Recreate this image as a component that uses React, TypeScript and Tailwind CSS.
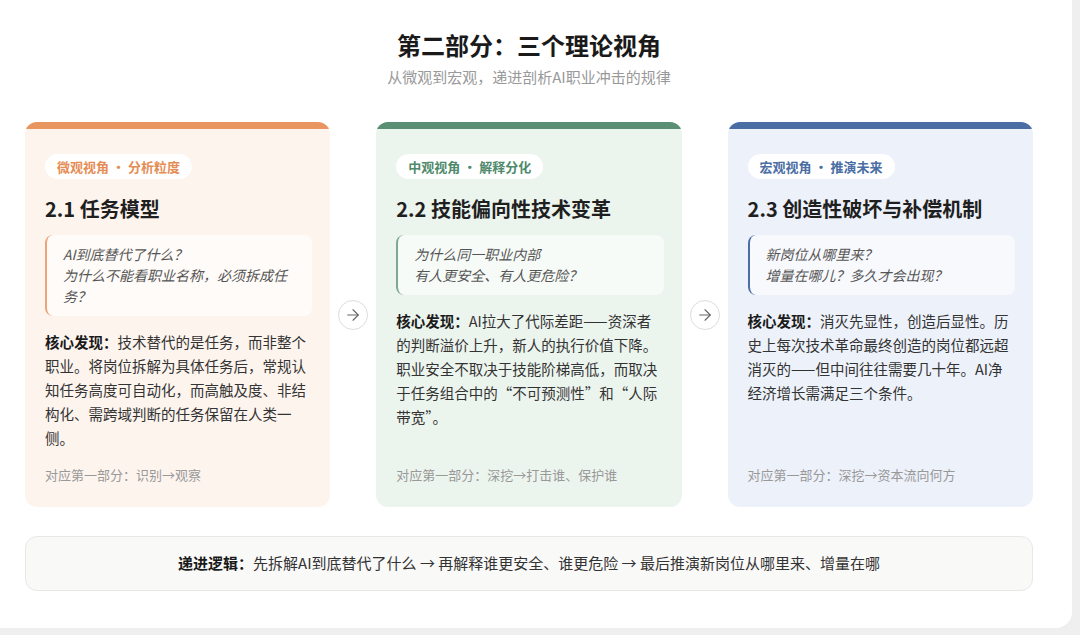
import { ArrowRight } from 'lucide-react'

const cards = [
  {
    bar: 'bg-[#e9955f]',
    bg: 'bg-[#fdf4ee]',
    badge: 'text-[#e58d55]',
    border: 'border-[#eba37a]',
    tag: '微观视角 • 分析粒度',
    title: '2.1 任务模型',
    quote: ['AI到底替代了什么？', '为什么不能看职业名称，必须拆成任务？'],
    body: '技术替代的是任务，而非整个职业。将岗位拆解为具体任务后，常规认知任务高度可自动化，而高触及度、非结构化、需跨域判断的任务保留在人类一侧。',
    foot: '对应第一部分：识别→观察',
  },
  {
    bar: 'bg-[#5b8f74]',
    bg: 'bg-[#ecf4ee]',
    badge: 'text-[#4f8a6b]',
    border: 'border-[#7ea892]',
    tag: '中观视角 • 解释分化',
    title: '2.2 技能偏向性技术变革',
    quote: ['为什么同一职业内部', '有人更安全、有人更危险？'],
    body: 'AI拉大了代际差距——资深者的判断溢价上升，新人的执行价值下降。职业安全不取决于技能阶梯高低，而取决于任务组合中的“不可预测性”和“人际带宽”。',
    foot: '对应第一部分：深挖→打击谁、保护谁',
  },
  {
    bar: 'bg-[#4a6ea4]',
    bg: 'bg-[#edf1f9]',
    badge: 'text-[#4a6ea4]',
    border: 'border-[#4a6ea4]',
    tag: '宏观视角 • 推演未来',
    title: '2.3 创造性破坏与补偿机制',
    quote: ['新岗位从哪里来？', '增量在哪儿？多久才会出现？'],
    body: '消灭先显性，创造后显性。历史上每次技术革命最终创造的岗位都远超消灭的——但中间往往需要几十年。AI净经济增长需满足三个条件。',
    foot: '对应第一部分：深挖→资本流向何方',
  },
]

function Card({ c }: { c: (typeof cards)[number] }) {
  return (
    <div className={`flex h-[385px] w-[306px] flex-col overflow-hidden rounded-xl ${c.bg}`}>
      <div className={`h-[7px] ${c.bar}`} />
      <div className="flex flex-1 flex-col pl-5 pr-[18px] pt-[25px] pb-[22px]">
        <span className={`self-start rounded-full bg-white px-3 py-[3px] text-[13px] font-bold ${c.badge}`}>
          {c.tag}
        </span>
        <h2 className="mt-[16px] text-[20px] font-bold leading-7 text-[#1f1f1f]">{c.title}</h2>
        <div className={`mt-[12px] rounded-lg border-l-2 bg-white/60 px-4 py-[9px] text-[14px] italic leading-[21px] text-[#555] ${c.border}`}>
          {c.quote.map((q) => (
            <div key={q}>{q}</div>
          ))}
        </div>
        <p className="mt-[14px] text-[14.5px] leading-[24px] text-[#333]">
          <span className="font-bold text-[#1a1a1a]">核心发现：</span>
          {c.body}
        </p>
        <div className="mt-auto text-[13px] text-[#999]">{c.foot}</div>
      </div>
    </div>
  )
}

function Arrow() {
  return (
    <div className="flex w-[46px] items-center justify-center">
      <div className="mt-[2px] flex h-[30px] w-[30px] items-center justify-center rounded-full border border-[#ddd] bg-white text-[#666]">
        <ArrowRight className="h-[18px] w-[18px]" strokeWidth={1.5} />
      </div>
    </div>
  )
}

export default function App() {
  return (
    <div className="h-[635px] w-[1080px] bg-[#efefef]" style={{ fontFamily: '"Noto Sans CJK SC", "Noto Sans", sans-serif' }}>
      <div className="h-[628px] w-[1072px] rounded-br-2xl bg-white pl-[25px] pt-[27px]">
        <div className="w-[1008px]">
          <h1 className="text-center text-[24px] font-bold leading-9 text-[#1a1a1a]">第二部分：三个理论视角</h1>
          <p className="mt-[3px] text-center text-[15px] text-[#999]">从微观到宏观，递进剖析AI职业冲击的规律</p>
          <div className="mt-[33px] flex">
            <Card c={cards[0]} />
            <Arrow />
            <Card c={cards[1]} />
            <Arrow />
            <Card c={cards[2]} />
          </div>
          <div className="mt-[29px] flex h-[55px] items-center justify-center rounded-xl border border-[#e8e8e8] bg-[#f9f9f8] text-[15px] text-[#333]">
            <span className="font-bold text-[#1a1a1a]">递进逻辑：</span>先拆解AI到底替代了什么 → 再解释谁更安全、谁更危险 → 最后推演新岗位从哪里来、增量在哪
          </div>
        </div>
      </div>
    </div>
  )
}
